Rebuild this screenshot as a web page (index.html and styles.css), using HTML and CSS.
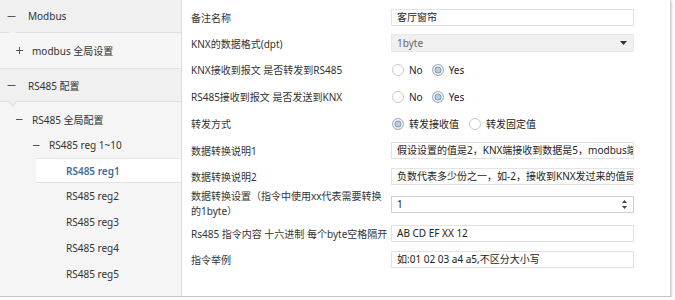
FILE: index.html
```html
<!DOCTYPE html>
<html lang="zh-CN">
<head>
<meta charset="utf-8">
<title>RS485 reg1</title>
<link rel="stylesheet" href="styles.css">
</head>
<body>
<div class="window">
  <aside class="sidebar">
    <div class="node head open">
      <span class="tog tog-l0"><svg width="9" height="9" viewBox="0 0 9 9"><path d="M0.5 4.5H8.5" stroke="#555" stroke-width="1"/></svg></span>
      <span>Modbus</span>
    </div>
    <div class="node sub">
      <span class="tog tog-l1"><svg width="7" height="7" viewBox="0 0 7 7"><path d="M0 3.5H7M3.5 0V7" stroke="#555" stroke-width="1"/></svg></span>
      <span>modbus 全局设置</span>
    </div>
    <div class="node head open">
      <span class="tog tog-l0"><svg width="9" height="9" viewBox="0 0 9 9"><path d="M0.5 4.5H8.5" stroke="#555" stroke-width="1"/></svg></span>
      <span>RS485 配置</span>
    </div>
    <div class="tree">
      <div class="item l1">
        <span class="tog tog-l1"><svg width="7" height="7" viewBox="0 0 7 7"><path d="M0 3.5H6.5" stroke="#555" stroke-width="1"/></svg></span>
        <span>RS485 全局配置</span>
      </div>
      <div class="item l2">
        <span class="tog tog-l1"><svg width="7" height="7" viewBox="0 0 7 7"><path d="M0 3.5H6.5" stroke="#555" stroke-width="1"/></svg></span>
        <span>RS485 reg 1~10</span>
      </div>
      <div class="item leaf sel">RS485 reg1</div>
      <div class="item leaf">RS485 reg2</div>
      <div class="item leaf">RS485 reg3</div>
      <div class="item leaf">RS485 reg4</div>
      <div class="item leaf">RS485 reg5</div>
    </div>
  </aside>
  <main class="content">
    <div class="form">
      <div class="label">备注名称</div>
      <div class="field">客厅窗帘</div>

      <div class="label">KNX的数据格式(dpt)</div>
      <div class="field select"><span>1byte</span><svg width="7" height="4" viewBox="0 0 7 4"><path d="M0 0H7L3.5 4Z" fill="#333"/></svg></div>

      <div class="label">KNX接收到报文 是否转发到RS485</div>
      <div class="radios">
        <span class="opt"><span class="radio"></span>No</span>
        <span class="opt"><span class="radio on"></span>Yes</span>
      </div>

      <div class="label">RS485接收到报文 是否发送到KNX</div>
      <div class="radios">
        <span class="opt"><span class="radio"></span>No</span>
        <span class="opt"><span class="radio on"></span>Yes</span>
      </div>

      <div class="label">转发方式</div>
      <div class="radios">
        <span class="opt wide"><span class="radio on"></span>转发接收值</span>
        <span class="opt wide"><span class="radio"></span>转发固定值</span>
      </div>

      <div class="label">数据转换说明1</div>
      <div class="field">假设设置的值是2，KNX端接收到数据是5，modbus端接收到的值是10</div>

      <div class="label">数据转换说明2</div>
      <div class="field">负数代表多少份之一，如-2，接收到KNX发过来的值是10，modbus端接收到的值是5</div>

      <div class="label two">数据转换设置（指令中使用xx代表需要转换<br>的1byte）</div>
      <div class="field spin"><span>1</span><span class="arrows"><svg width="5" height="3" viewBox="0 0 5 3"><path d="M0 3H5L2.5 0Z" fill="#444"/></svg><svg width="5" height="3" viewBox="0 0 5 3"><path d="M0 0H5L2.5 3Z" fill="#444"/></svg></span></div>

      <div class="label">Rs485 指令内容 十六进制 每个byte空格隔开</div>
      <div class="field">AB CD EF XX 12</div>

      <div class="label">指令举例</div>
      <div class="field">如:01 02 03 a4 a5,不区分大小写</div>
    </div>
  </main>
</div>
</body>
</html>
```
FILE: styles.css
```css
* { box-sizing: border-box; }

body {
  margin: 0;
  background: #fff;
  font-family: "Noto Sans", "Noto Sans CJK SC", sans-serif;
  font-size: 10px;
  color: #333;
}

.window {
  width: 671px;
  height: 297px;
  display: flex;
  background: #fff;
  border-right: 1px solid #cfcfcf;
  border-bottom: 1px solid #c4c4c4;
  box-shadow: 1px 1px 2px rgba(0, 0, 0, 0.18);
  overflow: hidden;
}

/* ---------- sidebar ---------- */
.sidebar {
  width: 182px;
  flex: none;
  background: #f5f5f5;
  border-right: 1px solid #dddddd;
}

.node {
  position: relative;
  display: flex;
  align-items: center;
  border-bottom: 1px solid #e0e0e0;
}

.node.head {
  height: 33px;
  padding-left: 7px;
  background: #f0f0f0;
}

.node.sub {
  height: 36px;
  padding-left: 16px;
  background: #f6f6f6;
}

.node.open::after {
  content: "";
  position: absolute;
  left: 9px;
  bottom: -4px;
  width: 6px;
  height: 6px;
  background: #f0f0f0;
  border-right: 1px solid #e0e0e0;
  border-bottom: 1px solid #e0e0e0;
  transform: rotate(45deg);
}

.tog {
  display: flex;
  align-items: center;
  flex: none;
}

.tog-l0 { width: 21px; }
.tog-l1 { width: 16px; }

.tree {
  padding-top: 4px;
}

.item {
  display: flex;
  align-items: center;
  height: 26px;
}

.item.l1 { padding-left: 16px; }
.item.l2 { padding-left: 33px; }

.item.leaf { padding-left: 66px; }

.item.sel {
  height: 25px;
  margin-left: 36px;
  padding-left: 30px;
  background: #fff;
  border-top: 1px solid #e6e6e6;
  border-bottom: 1px solid #e2e2e2;
  color: #3a6e9d;
  font-weight: 600;
}

/* ---------- content ---------- */
.content {
  flex: 1;
  padding: 4px 0 0 9px;
}

.form {
  display: grid;
  grid-template-columns: 200px 243px;
  grid-template-rows: 26px 26px 27px 27px 27px 27px 24px 32px 26px 26px;
  align-items: center;
}

.label {
  white-space: nowrap;
  color: #333;
}

.label.two {
  line-height: 15px;
}

.field {
  height: 17px;
  border: 1px solid #e3e3e3;
  background: #fff;
  padding: 0 5px;
  line-height: 15px;
  white-space: nowrap;
  overflow: hidden;
  color: #222;
}

.field.select {
  height: 18px;
  display: flex;
  align-items: center;
  justify-content: space-between;
  padding-right: 6px;
  background: #f0f0f0;
  border-color: #e8e8e8;
  color: #666;
}

.field.spin {
  display: flex;
  align-items: center;
  justify-content: space-between;
  padding-right: 6px;
  border-color: #cfcfcf;
}

.arrows {
  display: flex;
  flex-direction: column;
  gap: 3px;
}

.arrows svg { display: block; }

.radios {
  display: flex;
  align-items: center;
  padding-left: 1px;
}

.opt {
  display: flex;
  align-items: center;
  margin-right: 9px;
  color: #222;
}

.opt.wide { margin-right: 10px; }

.radio {
  width: 12px;
  height: 12px;
  margin-right: 5px;
  border-radius: 50%;
  border: 1px solid #cacaca;
  background: #fff;
  flex: none;
}

.radio.on {
  border-color: #a7b3c1;
  background: #b9cce0;
  box-shadow: inset 0 0 0 1.5px #fff, inset 0 0 0 2.5px #8199b2;
}
```
